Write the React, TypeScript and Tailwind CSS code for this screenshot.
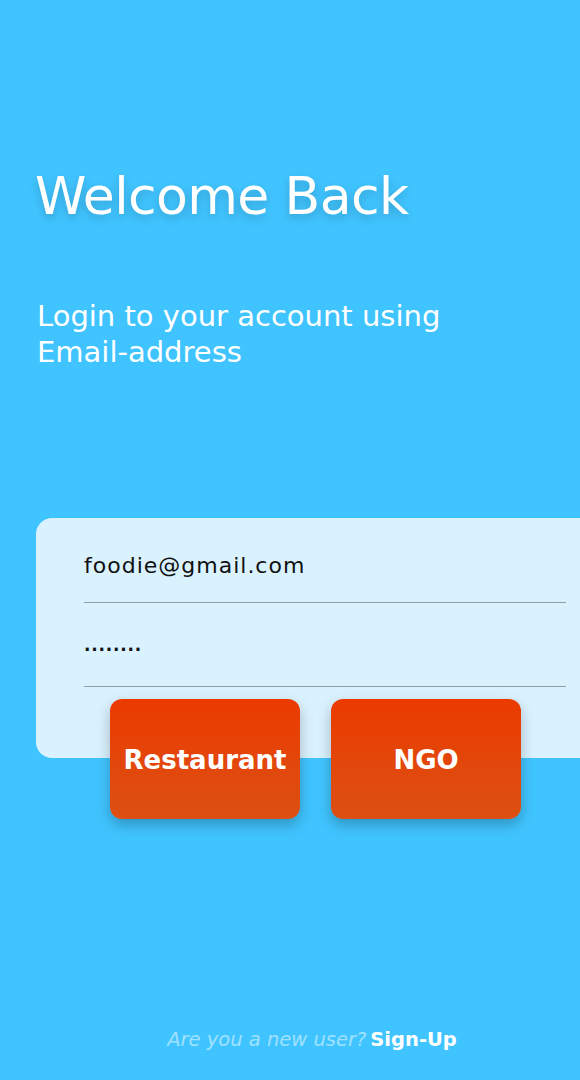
const font = { fontFamily: '"DejaVu Sans", "Open Sans", sans-serif' };

const RoleButton = ({ label }: { label: string }) => (
	<button className="h-[120px] w-[190px] rounded-xl bg-gradient-to-b from-[#EB3A00] to-[#DC4F12] pt-[2px] text-[26px] font-semibold text-white shadow-[0_6px_14px_rgba(0,0,0,0.25)]">
		{label}
	</button>
);

const App = () => {
	return (
		<div
			className="flex h-[1080px] w-[580px] flex-col overflow-hidden bg-[#40C4FF]"
			style={font}
		>
			<h1 className="ml-[35px] mt-[168px] text-[52px] leading-[56px] tracking-[-0.6px] text-white [text-shadow:0_4px_10px_rgba(0,0,0,0.2)]">
				Welcome Back
			</h1>
			<p className="ml-[37px] mt-[74px] text-[29px] leading-[36px] text-white">
				Login to your account using
				<br />
				Email-address
			</p>
			<div className="ml-9 mt-[148px] h-[240px] rounded-l-2xl bg-[#DAF2FE] pl-12 pr-[14px] pt-[32px]">
				<div className="border-b border-[#8E9EA6] pb-[20px] text-[22px] leading-[32px] tracking-[1px] text-[#111]">
					foodie@gmail.com
				</div>
				<div className="border-b border-[#8E9EA6] pb-[25px] pt-[26px] text-[17px] font-bold leading-[32px] tracking-[0.8px] text-[#111]">
					........
				</div>
				<div className="ml-[26px] mt-[12px] flex gap-[31px]">
					<RoleButton label="Restaurant" />
					<RoleButton label="NGO" />
				</div>
			</div>
			<div className="mt-auto flex justify-center pb-[27px] pl-[44px] text-[19.5px] leading-[26px]">
				<span className="italic text-white/50">Are you a new user?</span>
				<span className="ml-1 font-semibold text-white">Sign-Up</span>
			</div>
		</div>
	);
};

export default App;
